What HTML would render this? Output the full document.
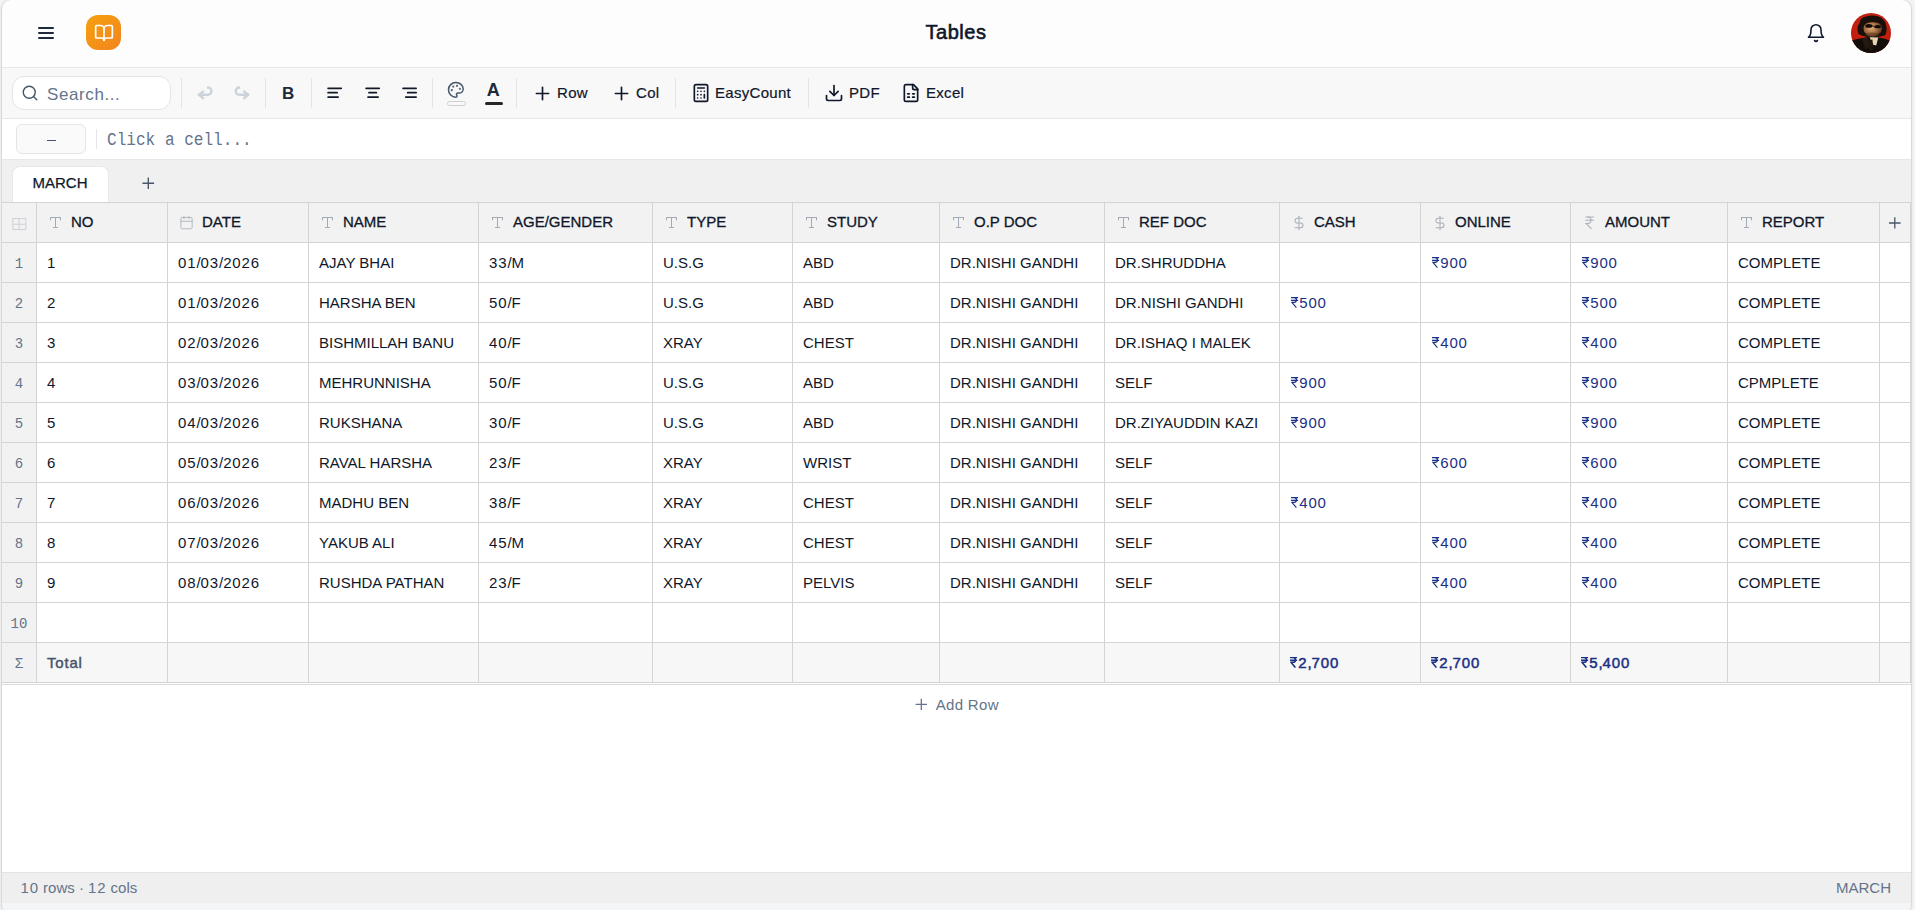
<!DOCTYPE html>
<html><head><meta charset="utf-8">
<style>
*{box-sizing:border-box;margin:0;padding:0}
html,body{width:1915px;height:910px;overflow:hidden;background:#fff;font-family:"Liberation Sans",sans-serif;color:#0f172a}
.a{position:absolute}
#frame{position:absolute;left:1px;top:-1px;width:1911px;height:916px;border:1px solid #d9d9d9;border-radius:10px;box-shadow:0 0 0 1px #ededed,0 0 0 40px #f4f4f4;z-index:50}
#hdr{left:0;top:0;width:1915px;height:68px;background:#fdfdfd;border-bottom:1px solid #e5e7eb}
#tb{left:0;top:68px;width:1915px;height:51px;background:#f8f8f9;border-bottom:1px solid #e5e7eb}
#fb{left:0;top:119px;width:1915px;height:41px;background:#fff;border-bottom:1px solid #e5e7eb}
#tabs{left:0;top:160px;width:1915px;height:42px;background:#f0f0f0}
#status{left:0;top:872px;width:1915px;height:31px;background:#efefef;border-top:1px solid #e2e4e8}
#foot{left:0;top:903px;width:1915px;height:10px;background:#f4f5f7}
.sep{position:absolute;top:78px;width:1px;height:30px;background:#e2e4e8}
.tt{position:absolute;top:84px;font-size:15px;line-height:18px;color:#0f172a;white-space:nowrap;letter-spacing:.3px;-webkit-text-stroke:.2px #0f172a}

.c{position:absolute;height:40px;border-right:1px solid #d4d4d4;border-bottom:1px solid #d4d4d4;white-space:nowrap;overflow:hidden}
.hc{background:#f2f2f2}
.hl{position:absolute;top:213px;font-size:15px;line-height:18px;font-weight:normal;-webkit-text-stroke:.3px #0f172a;letter-spacing:0px;color:#0f172a;white-space:nowrap}
.rn{background:#f2f2f2;text-align:center;font-family:"Liberation Mono",monospace;font-size:14px;line-height:42px;color:#64748b}
.dc{background:#fff;padding-left:10px;font-size:15px;line-height:39px;color:#0f172a}
.m{color:#1b3085;padding-left:11px}
.rp{display:inline-block;vertical-align:baseline;margin-right:.6px;position:relative;top:0px}
.d{letter-spacing:.85px}
.tr{background:#f7f7f7}
.rn.tr{background:#f2f2f2}
.tl{letter-spacing:.8px;font-weight:normal;-webkit-text-stroke:.45px #475569;color:#475569}
.tm{font-weight:normal;-webkit-text-stroke:.5px #1b3085;color:#1b3085}

</style></head><body>
<div id="hdr" class="a"></div>
<div id="tb" class="a"></div>
<div id="fb" class="a"></div>
<div id="tabs" class="a"></div>
<div id="status" class="a"></div>
<div id="foot" class="a"></div>
<!-- header -->
<div class="a" style="left:38px;top:27px;width:16px;height:2px;background:#1e293b;border-radius:1px"></div>
<div class="a" style="left:38px;top:32px;width:16px;height:2px;background:#1e293b;border-radius:1px"></div>
<div class="a" style="left:38px;top:37px;width:16px;height:2px;background:#1e293b;border-radius:1px"></div>
<div class="a" style="left:86px;top:15px;width:35px;height:35px;border-radius:12px;background:linear-gradient(135deg,#f5a00e,#f3851f)"></div>
<svg class="a" style="left:93.5px;top:22.5px" width="20" height="20" viewBox="0 0 24 24" fill="none" stroke="#fff" stroke-width="2" stroke-linecap="round" stroke-linejoin="round"><path d="M12 7v14"/><path d="M3 18a1 1 0 0 1-1-1V4a1 1 0 0 1 1-1h5a4 4 0 0 1 4 4 4 4 0 0 1 4-4h5a1 1 0 0 1 1 1v13a1 1 0 0 1-1 1h-6a3 3 0 0 0-3 3 3 3 0 0 0-3-3z"/></svg>
<div class="a" style="left:0;top:21.3px;width:1912px;text-align:center;font-size:20px;line-height:23px;font-weight:normal;-webkit-text-stroke:.6px #0f172a;letter-spacing:.55px;color:#0f172a">Tables</div>
<svg class="a" style="left:1806px;top:23px" width="20" height="20" viewBox="0 0 24 24" fill="none" stroke="#0f172a" stroke-width="1.9" stroke-linecap="round" stroke-linejoin="round"><path d="M6 8a6 6 0 0 1 12 0c0 7 3 9 3 9H3s3-2 3-9"/><path d="M10.3 21a1.94 1.94 0 0 0 3.4 0"/></svg>
<svg class="a" style="left:1851px;top:13px" width="40" height="40" viewBox="0 0 40 40">
<defs><clipPath id="cc"><circle cx="20" cy="20" r="20"/></clipPath>
<radialGradient id="fg" cx="0.42" cy="0.45" r="0.65"><stop offset="0" stop-color="#dcae7c"/><stop offset="0.45" stop-color="#b07848"/><stop offset="1" stop-color="#4a2c18"/></radialGradient>
<radialGradient id="bgg" cx="0.5" cy="0.4" r="0.7"><stop offset="0" stop-color="#d0260f"/><stop offset="1" stop-color="#b81b0c"/></radialGradient></defs>
<g clip-path="url(#cc)">
<rect width="40" height="40" fill="url(#bgg)"/>
<path d="M7.5 21 Q5 15 8.5 10 Q9 4.5 15 3.5 Q21 1.5 27.5 3.5 Q33.5 5.5 35 11.5 Q36.5 17 34.5 22 Q30 24 21 24 Q12 24 7.5 21z" fill="#1a100b"/>
<ellipse cx="21.7" cy="15.8" rx="9.2" ry="8.2" fill="url(#fg)"/>
<path d="M12 13 Q12.5 6 21 6.2 Q29.5 6 31.5 12.5 Q27.5 8.8 21 9.2 Q15 9.2 12 13z" fill="#1a100b"/>
<path d="M13.5 19 Q14 25 18 26 L26 26 Q29.5 23 29.5 19 Q25 23.5 21 23.5 Q16 23 13.5 19z" fill="#2a170d"/>
<ellipse cx="21" cy="21.6" rx="6.5" ry="2.2" fill="#5a3520" opacity=".5"/>
<ellipse cx="17.8" cy="12.9" rx="3.5" ry="1.9" fill="#120b08"/>
<ellipse cx="26.6" cy="13.7" rx="3.4" ry="1.6" fill="#120b08"/>
<path d="M21 13 L23.3 13.3" stroke="#120b08" stroke-width=".8"/>
<path d="M0 27.5 Q9 25 16.5 24.2 L20.5 27 L27.5 24.6 Q34 25.5 40 28 V40 H0z" fill="#130d0a"/>
<path d="M11 25.6 L16.5 24.4 L19.5 33 L14.5 36z" fill="#3a2a20" opacity=".45"/>
<path d="M18.8 24.2 L27.3 24.4 L25.2 32.5 L21.3 31.5z" fill="#e4d5b4"/>
<path d="M17.6 27.2 L21.4 26.6 L22.3 33.5 L20.2 40 L17.3 35z" fill="#1f150f"/>
</g></svg>
<!-- toolbar -->
<div class="a" style="left:11.5px;top:76.3px;width:159px;height:34px;border:1px solid #e3e5e9;border-radius:12px;background:#fff"></div>
<svg class="a" style="left:20.6px;top:84px" width="18" height="18" viewBox="0 0 24 24" fill="none" stroke="#475569" stroke-width="1.85" stroke-linecap="round" stroke-linejoin="round"><circle cx="11" cy="11" r="8"/><path d="m21 21-4.34-4.34"/></svg>
<div class="a" style="left:47px;top:84.7px;font-size:17px;line-height:20px;letter-spacing:.6px;color:#64748b">Search...</div>
<div class="sep" style="left:181px"></div>
<svg class="a" style="left:190px;top:80px" width="70" height="26" viewBox="0 0 70 26" fill="none" stroke="#cdd3db" stroke-width="2.4">
<path d="M17 7.5 H17.9 A3.6 3.65 0 0 1 17.9 14.8 H8.8"/><path d="M13.8 10.9 L9 14.8 L13.8 18.7"/>
<g transform="translate(67.2 0) scale(-1 1)"><path d="M17 7.5 H17.9 A3.6 3.65 0 0 1 17.9 14.8 H8.8"/><path d="M13.8 10.9 L9 14.8 L13.8 18.7"/></g>
</svg>
<div class="sep" style="left:265px"></div>
<div class="a" style="left:282px;top:84px;font-size:17px;line-height:20px;font-weight:bold;color:#1e293b">B</div>
<div class="sep" style="left:311px"></div>
<svg class="a" style="left:320px;top:82px" width="100" height="20" viewBox="320 82 100 20" fill="none" stroke="#111827" stroke-width="1.75" stroke-linecap="round"><path d="M328.1 88.3H341.2M328.1 92.7H337.1M328.1 97H338.1"/><path d="M366.1 88.3H379.2M369 92.7H376.3M368 97H378.1"/><path d="M403 88.3H416.1M407.7 92.7H416.1M405.8 97H416.1"/></svg>
<div class="sep" style="left:432px"></div>
<svg class="a" style="left:446.9px;top:81.1px" width="17.7" height="17.7" viewBox="0 0 24 24" fill="none" stroke="#475569" stroke-width="2" stroke-linecap="round" stroke-linejoin="round"><circle cx="13.5" cy="6.5" r=".5" fill="#475569"/><circle cx="17.5" cy="10.5" r=".5" fill="#475569"/><circle cx="8.5" cy="7.5" r=".5" fill="#475569"/><circle cx="6.5" cy="12.5" r=".5" fill="#475569"/><path d="M12 2C6.5 2 2 6.5 2 12s4.5 10 10 10c.926 0 1.648-.746 1.648-1.688 0-.437-.18-.835-.437-1.125-.29-.289-.438-.652-.438-1.125a1.64 1.64 0 0 1 1.668-1.668h1.996c3.051 0 5.555-2.503 5.555-5.554C21.965 6.012 17.461 2 12 2z"/></svg>
<div class="a" style="left:446.5px;top:101px;width:19.3px;height:4.8px;border:1px solid #cfcfcf;border-radius:3px;background:transparent"></div>
<div class="a" style="left:486.8px;top:79.5px;font-size:18px;line-height:20px;font-weight:bold;color:#1e293b">A</div>
<div class="a" style="left:485px;top:102px;width:18px;height:3px;border-radius:2px;background:#262626"></div>
<div class="sep" style="left:516px"></div>
<svg class="a" style="left:531.5px;top:82.5px" width="21" height="21" viewBox="0 0 24 24" fill="none" stroke="#0f172a" stroke-width="1.9" stroke-linecap="round"><path d="M5 12h14"/><path d="M12 5v14"/></svg>
<div class="tt" style="left:557px">Row</div>
<svg class="a" style="left:610.6px;top:82.5px" width="21" height="21" viewBox="0 0 24 24" fill="none" stroke="#0f172a" stroke-width="1.9" stroke-linecap="round"><path d="M5 12h14"/><path d="M12 5v14"/></svg>
<div class="tt" style="left:636px">Col</div>
<div class="sep" style="left:675px"></div>
<svg class="a" style="left:691px;top:83px" width="20" height="20" viewBox="0 0 24 24" fill="none" stroke="#0f172a" stroke-width="2" stroke-linecap="round" stroke-linejoin="round"><rect width="16" height="20" x="4" y="2" rx="2"/><line x1="8" x2="16" y1="6" y2="6"/><line x1="16" x2="16" y1="14" y2="18"/><path d="M16 10h.01"/><path d="M12 10h.01"/><path d="M8 10h.01"/><path d="M12 14h.01"/><path d="M8 14h.01"/><path d="M12 18h.01"/><path d="M8 18h.01"/></svg>
<div class="tt" style="left:715px">EasyCount</div>
<div class="sep" style="left:808px"></div>
<svg class="a" style="left:824px;top:83px" width="20" height="20" viewBox="0 0 24 24" fill="none" stroke="#0f172a" stroke-width="2" stroke-linecap="round" stroke-linejoin="round"><path d="M21 15v4a2 2 0 0 1-2 2H5a2 2 0 0 1-2-2v-4"/><path d="M7 10l5 5 5-5"/><path d="M12 15V3"/></svg>
<div class="tt" style="left:849px">PDF</div>
<svg class="a" style="left:901px;top:83px" width="20" height="20" viewBox="0 0 24 24" fill="none" stroke="#0f172a" stroke-width="2" stroke-linecap="round" stroke-linejoin="round"><path d="M15 2H6a2 2 0 0 0-2 2v16a2 2 0 0 0 2 2h12a2 2 0 0 0 2-2V7Z"/><path d="M14 2v4a2 2 0 0 0 2 2h4"/><path d="M8 13h2"/><path d="M14 13h2"/><path d="M8 17h2"/><path d="M14 17h2"/></svg>
<div class="tt" style="left:926px">Excel</div>
<!-- formula bar -->
<div class="a" style="left:16px;top:124px;width:70px;height:30px;border:1px solid #e3e5e9;border-radius:6px;background:#fafafa"></div>
<div class="a" style="left:46.6px;top:139.7px;width:9.3px;height:1.6px;background:#475569"></div>
<div class="a" style="left:96px;top:129px;width:1px;height:20px;background:#e2e4e8"></div>
<div class="a" style="left:106.8px;top:130px;font-family:'Liberation Mono',monospace;font-size:18px;line-height:20px;color:#64748b;transform:scaleX(.893);transform-origin:0 0">Click a cell...</div>
<!-- tabs -->
<div class="a" style="left:11.5px;top:165.7px;width:97px;height:36.3px;background:#fff;border-radius:8px 8px 0 0;border:1px solid #e8e8e8;border-bottom:none"></div>
<div class="a" style="left:12px;top:174px;width:96px;text-align:center;font-size:15px;line-height:18px;color:#0f172a;-webkit-text-stroke:.25px #0f172a">MARCH</div>
<svg class="a" style="left:141.5px;top:176.5px" width="13" height="13" viewBox="0 0 13 13" fill="none" stroke="#475569" stroke-width="1.35"><path d="M0.5 6.2H12.1M6.3 0.4V12.1"/></svg>
<div class="a" style="left:2px;top:202px;width:1909px;height:1px;background:#d4d4d4"></div>
<div class="c hc" style="left:2px;top:203px;width:35px;height:40px"></div>
<svg class="a" style="left:12px;top:218px" width="15" height="13" viewBox="0 0 15 13" fill="none" stroke="#cdd2d9" stroke-width="1.05"><rect x="0.8" y="0.5" width="13" height="11"/><path d="M7.1 0.5V11.5M0.8 6.3H13.8"/></svg>
<div class="c hc" style="left:37px;top:203px;width:131px;height:40px"></div>
<svg class="a" style="left:49px;top:216px" width="14" height="14" viewBox="0 0 14 14" fill="none" stroke="#a4aab3" stroke-width="1"><path d="M1 1.5H12M1.5 1V4.3M11.5 1V4.3M6.5 1.5V11.5M4 11.5H9"/></svg>
<div class="hl" style="left:71px">NO</div>
<div class="c hc" style="left:168px;top:203px;width:141px;height:40px"></div>
<svg class="a" style="left:179px;top:214.7px" width="15" height="15" viewBox="0 0 24 24" fill="none" stroke="#b3b9c2" stroke-width="1.6" stroke-linecap="round" stroke-linejoin="round"><path d="M8 2v4"/><path d="M16 2v4"/><rect width="18" height="18" x="3" y="4" rx="2"/><path d="M3 10h18"/></svg>
<div class="hl" style="left:202px">DATE</div>
<div class="c hc" style="left:309px;top:203px;width:170px;height:40px"></div>
<svg class="a" style="left:321px;top:216px" width="14" height="14" viewBox="0 0 14 14" fill="none" stroke="#a4aab3" stroke-width="1"><path d="M1 1.5H12M1.5 1V4.3M11.5 1V4.3M6.5 1.5V11.5M4 11.5H9"/></svg>
<div class="hl" style="left:343px">NAME</div>
<div class="c hc" style="left:479px;top:203px;width:174px;height:40px"></div>
<svg class="a" style="left:491px;top:216px" width="14" height="14" viewBox="0 0 14 14" fill="none" stroke="#a4aab3" stroke-width="1"><path d="M1 1.5H12M1.5 1V4.3M11.5 1V4.3M6.5 1.5V11.5M4 11.5H9"/></svg>
<div class="hl" style="left:513px">AGE/GENDER</div>
<div class="c hc" style="left:653px;top:203px;width:140px;height:40px"></div>
<svg class="a" style="left:665px;top:216px" width="14" height="14" viewBox="0 0 14 14" fill="none" stroke="#a4aab3" stroke-width="1"><path d="M1 1.5H12M1.5 1V4.3M11.5 1V4.3M6.5 1.5V11.5M4 11.5H9"/></svg>
<div class="hl" style="left:687px">TYPE</div>
<div class="c hc" style="left:793px;top:203px;width:147px;height:40px"></div>
<svg class="a" style="left:805px;top:216px" width="14" height="14" viewBox="0 0 14 14" fill="none" stroke="#a4aab3" stroke-width="1"><path d="M1 1.5H12M1.5 1V4.3M11.5 1V4.3M6.5 1.5V11.5M4 11.5H9"/></svg>
<div class="hl" style="left:827px">STUDY</div>
<div class="c hc" style="left:940px;top:203px;width:165px;height:40px"></div>
<svg class="a" style="left:952px;top:216px" width="14" height="14" viewBox="0 0 14 14" fill="none" stroke="#a4aab3" stroke-width="1"><path d="M1 1.5H12M1.5 1V4.3M11.5 1V4.3M6.5 1.5V11.5M4 11.5H9"/></svg>
<div class="hl" style="left:974px">O.P DOC</div>
<div class="c hc" style="left:1105px;top:203px;width:175px;height:40px"></div>
<svg class="a" style="left:1117px;top:216px" width="14" height="14" viewBox="0 0 14 14" fill="none" stroke="#a4aab3" stroke-width="1"><path d="M1 1.5H12M1.5 1V4.3M11.5 1V4.3M6.5 1.5V11.5M4 11.5H9"/></svg>
<div class="hl" style="left:1139px">REF DOC</div>
<div class="c hc" style="left:1280px;top:203px;width:141px;height:40px"></div>
<svg class="a" style="left:1290.8px;top:214.8px" width="16" height="16" viewBox="0 0 24 24" fill="none" stroke="#a9afb8" stroke-width="1.55" stroke-linecap="round" stroke-linejoin="round"><line x1="12" x2="12" y1="2" y2="22"/><path d="M17 5H9.5a3.5 3.5 0 0 0 0 7h5a3.5 3.5 0 0 1 0 7H6"/></svg>
<div class="hl" style="left:1314px">CASH</div>
<div class="c hc" style="left:1421px;top:203px;width:150px;height:40px"></div>
<svg class="a" style="left:1431.8px;top:214.8px" width="16" height="16" viewBox="0 0 24 24" fill="none" stroke="#a9afb8" stroke-width="1.55" stroke-linecap="round" stroke-linejoin="round"><line x1="12" x2="12" y1="2" y2="22"/><path d="M17 5H9.5a3.5 3.5 0 0 0 0 7h5a3.5 3.5 0 0 1 0 7H6"/></svg>
<div class="hl" style="left:1455px">ONLINE</div>
<div class="c hc" style="left:1571px;top:203px;width:157px;height:40px"></div>
<svg class="a" style="left:1581.8px;top:214.6px" width="15.5" height="15.5" viewBox="0 0 24 24" fill="none" stroke="#a9afb8" stroke-width="1.6" stroke-linecap="round" stroke-linejoin="round"><path d="M6 3h12"/><path d="M6 8h12"/><path d="m6 13 8.5 8"/><path d="M6 13h3"/><path d="M9 13c6.667 0 6.667-10 0-10"/></svg>
<div class="hl" style="left:1605px">AMOUNT</div>
<div class="c hc" style="left:1728px;top:203px;width:152px;height:40px"></div>
<svg class="a" style="left:1740px;top:216px" width="14" height="14" viewBox="0 0 14 14" fill="none" stroke="#a4aab3" stroke-width="1"><path d="M1 1.5H12M1.5 1V4.3M11.5 1V4.3M6.5 1.5V11.5M4 11.5H9"/></svg>
<div class="hl" style="left:1762px">REPORT</div>
<div class="c hc" style="left:1880px;top:203px;width:31px;height:40px"></div>
<svg class="a" style="left:1889px;top:217px" width="12" height="12" viewBox="0 0 12 12" fill="none" stroke="#475569" stroke-width="1.3"><path d="M0 6H11.6M5.8 0.2V11.6"/></svg>
<div class="c rn" style="left:2px;top:243px;width:35px;height:40px">1</div>
<div class="c dc" style="left:37px;top:243px;width:131px">1</div>
<div class="c dc" style="left:168px;top:243px;width:141px"><span class="d">01</span>/<span class="d">03</span>/<span class="d">2026</span></div>
<div class="c dc" style="left:309px;top:243px;width:170px">AJAY BHAI</div>
<div class="c dc" style="left:479px;top:243px;width:174px"><span class="d">33</span>/M</div>
<div class="c dc" style="left:653px;top:243px;width:140px">U.S.G</div>
<div class="c dc" style="left:793px;top:243px;width:147px">ABD</div>
<div class="c dc" style="left:940px;top:243px;width:165px">DR.NISHI GANDHI</div>
<div class="c dc" style="left:1105px;top:243px;width:175px">DR.SHRUDDHA</div>
<div class="c dc" style="left:1280px;top:243px;width:141px"></div>
<div class="c dc m" style="left:1421px;top:243px;width:150px"><svg class="rp" width="7.6" height="11" viewBox="0 0 7.6 11" fill="none" stroke="currentColor" stroke-width="1.15"><path d="M0 0.55H7.1M0 3.35H7.1M2.2 0.55H3C6.3 0.55 6.3 5.35 3 5.35H0.3M0.9 5.35L5.4 10.6"/></svg><span class="d">900</span></div>
<div class="c dc m" style="left:1571px;top:243px;width:157px"><svg class="rp" width="7.6" height="11" viewBox="0 0 7.6 11" fill="none" stroke="currentColor" stroke-width="1.15"><path d="M0 0.55H7.1M0 3.35H7.1M2.2 0.55H3C6.3 0.55 6.3 5.35 3 5.35H0.3M0.9 5.35L5.4 10.6"/></svg><span class="d">900</span></div>
<div class="c dc" style="left:1728px;top:243px;width:152px">COMPLETE</div>
<div class="c dc" style="left:1880px;top:243px;width:31px"></div>
<div class="c rn" style="left:2px;top:283px;width:35px;height:40px">2</div>
<div class="c dc" style="left:37px;top:283px;width:131px">2</div>
<div class="c dc" style="left:168px;top:283px;width:141px"><span class="d">01</span>/<span class="d">03</span>/<span class="d">2026</span></div>
<div class="c dc" style="left:309px;top:283px;width:170px">HARSHA BEN</div>
<div class="c dc" style="left:479px;top:283px;width:174px"><span class="d">50</span>/F</div>
<div class="c dc" style="left:653px;top:283px;width:140px">U.S.G</div>
<div class="c dc" style="left:793px;top:283px;width:147px">ABD</div>
<div class="c dc" style="left:940px;top:283px;width:165px">DR.NISHI GANDHI</div>
<div class="c dc" style="left:1105px;top:283px;width:175px">DR.NISHI GANDHI</div>
<div class="c dc m" style="left:1280px;top:283px;width:141px"><svg class="rp" width="7.6" height="11" viewBox="0 0 7.6 11" fill="none" stroke="currentColor" stroke-width="1.15"><path d="M0 0.55H7.1M0 3.35H7.1M2.2 0.55H3C6.3 0.55 6.3 5.35 3 5.35H0.3M0.9 5.35L5.4 10.6"/></svg><span class="d">500</span></div>
<div class="c dc" style="left:1421px;top:283px;width:150px"></div>
<div class="c dc m" style="left:1571px;top:283px;width:157px"><svg class="rp" width="7.6" height="11" viewBox="0 0 7.6 11" fill="none" stroke="currentColor" stroke-width="1.15"><path d="M0 0.55H7.1M0 3.35H7.1M2.2 0.55H3C6.3 0.55 6.3 5.35 3 5.35H0.3M0.9 5.35L5.4 10.6"/></svg><span class="d">500</span></div>
<div class="c dc" style="left:1728px;top:283px;width:152px">COMPLETE</div>
<div class="c dc" style="left:1880px;top:283px;width:31px"></div>
<div class="c rn" style="left:2px;top:323px;width:35px;height:40px">3</div>
<div class="c dc" style="left:37px;top:323px;width:131px">3</div>
<div class="c dc" style="left:168px;top:323px;width:141px"><span class="d">02</span>/<span class="d">03</span>/<span class="d">2026</span></div>
<div class="c dc" style="left:309px;top:323px;width:170px">BISHMILLAH BANU</div>
<div class="c dc" style="left:479px;top:323px;width:174px"><span class="d">40</span>/F</div>
<div class="c dc" style="left:653px;top:323px;width:140px">XRAY</div>
<div class="c dc" style="left:793px;top:323px;width:147px">CHEST</div>
<div class="c dc" style="left:940px;top:323px;width:165px">DR.NISHI GANDHI</div>
<div class="c dc" style="left:1105px;top:323px;width:175px">DR.ISHAQ I MALEK</div>
<div class="c dc" style="left:1280px;top:323px;width:141px"></div>
<div class="c dc m" style="left:1421px;top:323px;width:150px"><svg class="rp" width="7.6" height="11" viewBox="0 0 7.6 11" fill="none" stroke="currentColor" stroke-width="1.15"><path d="M0 0.55H7.1M0 3.35H7.1M2.2 0.55H3C6.3 0.55 6.3 5.35 3 5.35H0.3M0.9 5.35L5.4 10.6"/></svg><span class="d">400</span></div>
<div class="c dc m" style="left:1571px;top:323px;width:157px"><svg class="rp" width="7.6" height="11" viewBox="0 0 7.6 11" fill="none" stroke="currentColor" stroke-width="1.15"><path d="M0 0.55H7.1M0 3.35H7.1M2.2 0.55H3C6.3 0.55 6.3 5.35 3 5.35H0.3M0.9 5.35L5.4 10.6"/></svg><span class="d">400</span></div>
<div class="c dc" style="left:1728px;top:323px;width:152px">COMPLETE</div>
<div class="c dc" style="left:1880px;top:323px;width:31px"></div>
<div class="c rn" style="left:2px;top:363px;width:35px;height:40px">4</div>
<div class="c dc" style="left:37px;top:363px;width:131px">4</div>
<div class="c dc" style="left:168px;top:363px;width:141px"><span class="d">03</span>/<span class="d">03</span>/<span class="d">2026</span></div>
<div class="c dc" style="left:309px;top:363px;width:170px">MEHRUNNISHA</div>
<div class="c dc" style="left:479px;top:363px;width:174px"><span class="d">50</span>/F</div>
<div class="c dc" style="left:653px;top:363px;width:140px">U.S.G</div>
<div class="c dc" style="left:793px;top:363px;width:147px">ABD</div>
<div class="c dc" style="left:940px;top:363px;width:165px">DR.NISHI GANDHI</div>
<div class="c dc" style="left:1105px;top:363px;width:175px">SELF</div>
<div class="c dc m" style="left:1280px;top:363px;width:141px"><svg class="rp" width="7.6" height="11" viewBox="0 0 7.6 11" fill="none" stroke="currentColor" stroke-width="1.15"><path d="M0 0.55H7.1M0 3.35H7.1M2.2 0.55H3C6.3 0.55 6.3 5.35 3 5.35H0.3M0.9 5.35L5.4 10.6"/></svg><span class="d">900</span></div>
<div class="c dc" style="left:1421px;top:363px;width:150px"></div>
<div class="c dc m" style="left:1571px;top:363px;width:157px"><svg class="rp" width="7.6" height="11" viewBox="0 0 7.6 11" fill="none" stroke="currentColor" stroke-width="1.15"><path d="M0 0.55H7.1M0 3.35H7.1M2.2 0.55H3C6.3 0.55 6.3 5.35 3 5.35H0.3M0.9 5.35L5.4 10.6"/></svg><span class="d">900</span></div>
<div class="c dc" style="left:1728px;top:363px;width:152px">CPMPLETE</div>
<div class="c dc" style="left:1880px;top:363px;width:31px"></div>
<div class="c rn" style="left:2px;top:403px;width:35px;height:40px">5</div>
<div class="c dc" style="left:37px;top:403px;width:131px">5</div>
<div class="c dc" style="left:168px;top:403px;width:141px"><span class="d">04</span>/<span class="d">03</span>/<span class="d">2026</span></div>
<div class="c dc" style="left:309px;top:403px;width:170px">RUKSHANA</div>
<div class="c dc" style="left:479px;top:403px;width:174px"><span class="d">30</span>/F</div>
<div class="c dc" style="left:653px;top:403px;width:140px">U.S.G</div>
<div class="c dc" style="left:793px;top:403px;width:147px">ABD</div>
<div class="c dc" style="left:940px;top:403px;width:165px">DR.NISHI GANDHI</div>
<div class="c dc" style="left:1105px;top:403px;width:175px">DR.ZIYAUDDIN KAZI</div>
<div class="c dc m" style="left:1280px;top:403px;width:141px"><svg class="rp" width="7.6" height="11" viewBox="0 0 7.6 11" fill="none" stroke="currentColor" stroke-width="1.15"><path d="M0 0.55H7.1M0 3.35H7.1M2.2 0.55H3C6.3 0.55 6.3 5.35 3 5.35H0.3M0.9 5.35L5.4 10.6"/></svg><span class="d">900</span></div>
<div class="c dc" style="left:1421px;top:403px;width:150px"></div>
<div class="c dc m" style="left:1571px;top:403px;width:157px"><svg class="rp" width="7.6" height="11" viewBox="0 0 7.6 11" fill="none" stroke="currentColor" stroke-width="1.15"><path d="M0 0.55H7.1M0 3.35H7.1M2.2 0.55H3C6.3 0.55 6.3 5.35 3 5.35H0.3M0.9 5.35L5.4 10.6"/></svg><span class="d">900</span></div>
<div class="c dc" style="left:1728px;top:403px;width:152px">COMPLETE</div>
<div class="c dc" style="left:1880px;top:403px;width:31px"></div>
<div class="c rn" style="left:2px;top:443px;width:35px;height:40px">6</div>
<div class="c dc" style="left:37px;top:443px;width:131px">6</div>
<div class="c dc" style="left:168px;top:443px;width:141px"><span class="d">05</span>/<span class="d">03</span>/<span class="d">2026</span></div>
<div class="c dc" style="left:309px;top:443px;width:170px">RAVAL HARSHA</div>
<div class="c dc" style="left:479px;top:443px;width:174px"><span class="d">23</span>/F</div>
<div class="c dc" style="left:653px;top:443px;width:140px">XRAY</div>
<div class="c dc" style="left:793px;top:443px;width:147px">WRIST</div>
<div class="c dc" style="left:940px;top:443px;width:165px">DR.NISHI GANDHI</div>
<div class="c dc" style="left:1105px;top:443px;width:175px">SELF</div>
<div class="c dc" style="left:1280px;top:443px;width:141px"></div>
<div class="c dc m" style="left:1421px;top:443px;width:150px"><svg class="rp" width="7.6" height="11" viewBox="0 0 7.6 11" fill="none" stroke="currentColor" stroke-width="1.15"><path d="M0 0.55H7.1M0 3.35H7.1M2.2 0.55H3C6.3 0.55 6.3 5.35 3 5.35H0.3M0.9 5.35L5.4 10.6"/></svg><span class="d">600</span></div>
<div class="c dc m" style="left:1571px;top:443px;width:157px"><svg class="rp" width="7.6" height="11" viewBox="0 0 7.6 11" fill="none" stroke="currentColor" stroke-width="1.15"><path d="M0 0.55H7.1M0 3.35H7.1M2.2 0.55H3C6.3 0.55 6.3 5.35 3 5.35H0.3M0.9 5.35L5.4 10.6"/></svg><span class="d">600</span></div>
<div class="c dc" style="left:1728px;top:443px;width:152px">COMPLETE</div>
<div class="c dc" style="left:1880px;top:443px;width:31px"></div>
<div class="c rn" style="left:2px;top:483px;width:35px;height:40px">7</div>
<div class="c dc" style="left:37px;top:483px;width:131px">7</div>
<div class="c dc" style="left:168px;top:483px;width:141px"><span class="d">06</span>/<span class="d">03</span>/<span class="d">2026</span></div>
<div class="c dc" style="left:309px;top:483px;width:170px">MADHU BEN</div>
<div class="c dc" style="left:479px;top:483px;width:174px"><span class="d">38</span>/F</div>
<div class="c dc" style="left:653px;top:483px;width:140px">XRAY</div>
<div class="c dc" style="left:793px;top:483px;width:147px">CHEST</div>
<div class="c dc" style="left:940px;top:483px;width:165px">DR.NISHI GANDHI</div>
<div class="c dc" style="left:1105px;top:483px;width:175px">SELF</div>
<div class="c dc m" style="left:1280px;top:483px;width:141px"><svg class="rp" width="7.6" height="11" viewBox="0 0 7.6 11" fill="none" stroke="currentColor" stroke-width="1.15"><path d="M0 0.55H7.1M0 3.35H7.1M2.2 0.55H3C6.3 0.55 6.3 5.35 3 5.35H0.3M0.9 5.35L5.4 10.6"/></svg><span class="d">400</span></div>
<div class="c dc" style="left:1421px;top:483px;width:150px"></div>
<div class="c dc m" style="left:1571px;top:483px;width:157px"><svg class="rp" width="7.6" height="11" viewBox="0 0 7.6 11" fill="none" stroke="currentColor" stroke-width="1.15"><path d="M0 0.55H7.1M0 3.35H7.1M2.2 0.55H3C6.3 0.55 6.3 5.35 3 5.35H0.3M0.9 5.35L5.4 10.6"/></svg><span class="d">400</span></div>
<div class="c dc" style="left:1728px;top:483px;width:152px">COMPLETE</div>
<div class="c dc" style="left:1880px;top:483px;width:31px"></div>
<div class="c rn" style="left:2px;top:523px;width:35px;height:40px">8</div>
<div class="c dc" style="left:37px;top:523px;width:131px">8</div>
<div class="c dc" style="left:168px;top:523px;width:141px"><span class="d">07</span>/<span class="d">03</span>/<span class="d">2026</span></div>
<div class="c dc" style="left:309px;top:523px;width:170px">YAKUB ALI</div>
<div class="c dc" style="left:479px;top:523px;width:174px"><span class="d">45</span>/M</div>
<div class="c dc" style="left:653px;top:523px;width:140px">XRAY</div>
<div class="c dc" style="left:793px;top:523px;width:147px">CHEST</div>
<div class="c dc" style="left:940px;top:523px;width:165px">DR.NISHI GANDHI</div>
<div class="c dc" style="left:1105px;top:523px;width:175px">SELF</div>
<div class="c dc" style="left:1280px;top:523px;width:141px"></div>
<div class="c dc m" style="left:1421px;top:523px;width:150px"><svg class="rp" width="7.6" height="11" viewBox="0 0 7.6 11" fill="none" stroke="currentColor" stroke-width="1.15"><path d="M0 0.55H7.1M0 3.35H7.1M2.2 0.55H3C6.3 0.55 6.3 5.35 3 5.35H0.3M0.9 5.35L5.4 10.6"/></svg><span class="d">400</span></div>
<div class="c dc m" style="left:1571px;top:523px;width:157px"><svg class="rp" width="7.6" height="11" viewBox="0 0 7.6 11" fill="none" stroke="currentColor" stroke-width="1.15"><path d="M0 0.55H7.1M0 3.35H7.1M2.2 0.55H3C6.3 0.55 6.3 5.35 3 5.35H0.3M0.9 5.35L5.4 10.6"/></svg><span class="d">400</span></div>
<div class="c dc" style="left:1728px;top:523px;width:152px">COMPLETE</div>
<div class="c dc" style="left:1880px;top:523px;width:31px"></div>
<div class="c rn" style="left:2px;top:563px;width:35px;height:40px">9</div>
<div class="c dc" style="left:37px;top:563px;width:131px">9</div>
<div class="c dc" style="left:168px;top:563px;width:141px"><span class="d">08</span>/<span class="d">03</span>/<span class="d">2026</span></div>
<div class="c dc" style="left:309px;top:563px;width:170px">RUSHDA PATHAN</div>
<div class="c dc" style="left:479px;top:563px;width:174px"><span class="d">23</span>/F</div>
<div class="c dc" style="left:653px;top:563px;width:140px">XRAY</div>
<div class="c dc" style="left:793px;top:563px;width:147px">PELVIS</div>
<div class="c dc" style="left:940px;top:563px;width:165px">DR.NISHI GANDHI</div>
<div class="c dc" style="left:1105px;top:563px;width:175px">SELF</div>
<div class="c dc" style="left:1280px;top:563px;width:141px"></div>
<div class="c dc m" style="left:1421px;top:563px;width:150px"><svg class="rp" width="7.6" height="11" viewBox="0 0 7.6 11" fill="none" stroke="currentColor" stroke-width="1.15"><path d="M0 0.55H7.1M0 3.35H7.1M2.2 0.55H3C6.3 0.55 6.3 5.35 3 5.35H0.3M0.9 5.35L5.4 10.6"/></svg><span class="d">400</span></div>
<div class="c dc m" style="left:1571px;top:563px;width:157px"><svg class="rp" width="7.6" height="11" viewBox="0 0 7.6 11" fill="none" stroke="currentColor" stroke-width="1.15"><path d="M0 0.55H7.1M0 3.35H7.1M2.2 0.55H3C6.3 0.55 6.3 5.35 3 5.35H0.3M0.9 5.35L5.4 10.6"/></svg><span class="d">400</span></div>
<div class="c dc" style="left:1728px;top:563px;width:152px">COMPLETE</div>
<div class="c dc" style="left:1880px;top:563px;width:31px"></div>
<div class="c rn" style="left:2px;top:603px;width:35px;height:40px">10</div>
<div class="c dc" style="left:37px;top:603px;width:131px"></div>
<div class="c dc" style="left:168px;top:603px;width:141px"></div>
<div class="c dc" style="left:309px;top:603px;width:170px"></div>
<div class="c dc" style="left:479px;top:603px;width:174px"></div>
<div class="c dc" style="left:653px;top:603px;width:140px"></div>
<div class="c dc" style="left:793px;top:603px;width:147px"></div>
<div class="c dc" style="left:940px;top:603px;width:165px"></div>
<div class="c dc" style="left:1105px;top:603px;width:175px"></div>
<div class="c dc" style="left:1280px;top:603px;width:141px"></div>
<div class="c dc" style="left:1421px;top:603px;width:150px"></div>
<div class="c dc" style="left:1571px;top:603px;width:157px"></div>
<div class="c dc" style="left:1728px;top:603px;width:152px"></div>
<div class="c dc" style="left:1880px;top:603px;width:31px"></div>
<div class="c rn tr" style="left:2px;top:643px;width:35px;height:40px">&Sigma;</div>
<div class="c dc tr tl" style="left:37px;top:643px;width:131px">Total</div>
<div class="c dc tr" style="left:168px;top:643px;width:141px"></div>
<div class="c dc tr" style="left:309px;top:643px;width:170px"></div>
<div class="c dc tr" style="left:479px;top:643px;width:174px"></div>
<div class="c dc tr" style="left:653px;top:643px;width:140px"></div>
<div class="c dc tr" style="left:793px;top:643px;width:147px"></div>
<div class="c dc tr" style="left:940px;top:643px;width:165px"></div>
<div class="c dc tr" style="left:1105px;top:643px;width:175px"></div>
<div class="c dc tr tm" style="left:1280px;top:643px;width:141px"><svg class="rp" width="7.6" height="11" viewBox="0 0 7.6 11" fill="none" stroke="currentColor" stroke-width="1.5"><path d="M0 0.55H7.1M0 3.35H7.1M2.2 0.55H3C6.3 0.55 6.3 5.35 3 5.35H0.3M0.9 5.35L5.4 10.6"/></svg><span class="d">2</span>,<span class="d">700</span></div>
<div class="c dc tr tm" style="left:1421px;top:643px;width:150px"><svg class="rp" width="7.6" height="11" viewBox="0 0 7.6 11" fill="none" stroke="currentColor" stroke-width="1.5"><path d="M0 0.55H7.1M0 3.35H7.1M2.2 0.55H3C6.3 0.55 6.3 5.35 3 5.35H0.3M0.9 5.35L5.4 10.6"/></svg><span class="d">2</span>,<span class="d">700</span></div>
<div class="c dc tr tm" style="left:1571px;top:643px;width:157px"><svg class="rp" width="7.6" height="11" viewBox="0 0 7.6 11" fill="none" stroke="currentColor" stroke-width="1.5"><path d="M0 0.55H7.1M0 3.35H7.1M2.2 0.55H3C6.3 0.55 6.3 5.35 3 5.35H0.3M0.9 5.35L5.4 10.6"/></svg><span class="d">5</span>,<span class="d">400</span></div>
<div class="c dc tr" style="left:1728px;top:643px;width:152px"></div>
<div class="c dc tr" style="left:1880px;top:643px;width:31px"></div>
<div class="a" style="left:2px;top:684px;width:1909px;height:1px;background:#dcdcdc"></div>
<svg class="a" style="left:915.2px;top:698px" width="13" height="13" viewBox="0 0 13 13" fill="none" stroke="#64748b" stroke-width="1.3"><path d="M0.6 6.4H12M6.3 0.7V12"/></svg>
<div class="a" style="left:935.8px;top:696px;font-size:15px;line-height:18px;letter-spacing:.3px;color:#64748b">Add Row</div>
<div class="a" style="left:20.5px;top:879px;font-size:15px;line-height:18px;color:#64748b"><span class="d">10</span> rows &middot; <span class="d">12</span> cols</div>
<div class="a" style="left:1791px;top:879px;width:100px;text-align:right;font-size:15px;line-height:18px;color:#64748b">MARCH</div>
<div id="frame"></div>
</body></html>
